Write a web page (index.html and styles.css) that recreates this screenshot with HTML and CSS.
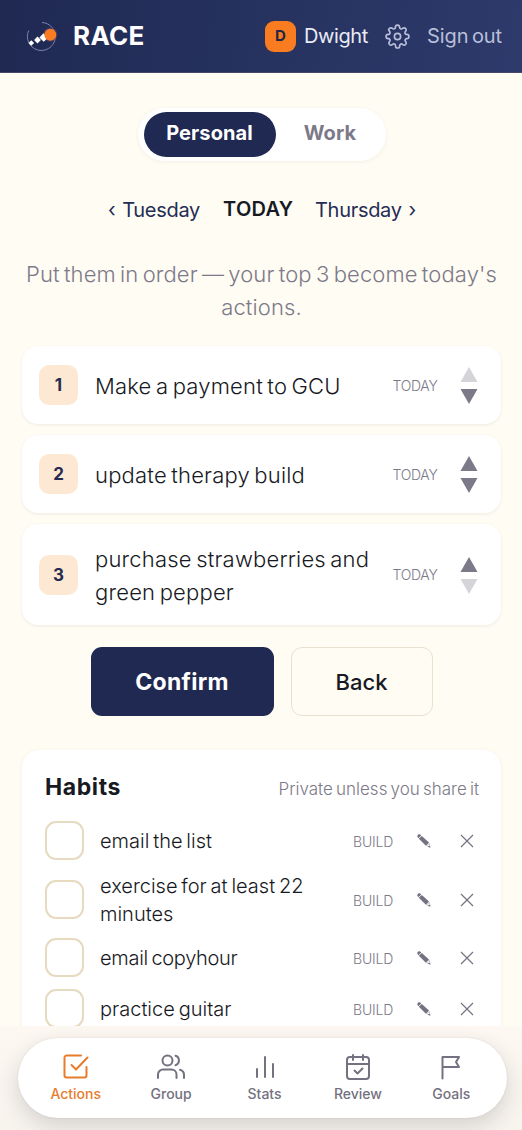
FILE: index.html
```
<!DOCTYPE html>
<html lang="en">
<head>
<meta charset="utf-8">
<title>RACE</title>
<link rel="stylesheet" href="styles.css">
</head>
<body>
<svg class="defs" width="0" height="0">
  <symbol id="pencil" viewBox="0 0 14 14"><path d="M.3 2.600Q.2 1.300 1.200.6 2.200-.2 3.200.4L4.300 1.500 1.300 4.300zM1.800 4.800 4.800 1.900 12 8.600 8.900 11.700z" fill="currentColor"/><path d="m9.600 11.900 2.500-2.600 1.200 3.900z" fill="none" stroke="currentColor" stroke-width=".4"/><path d="m11.900 11.900 1.200 1.200-1.600-.5z" fill="currentColor" stroke="currentColor" stroke-width=".8"/></symbol>
  <symbol id="cross" viewBox="0 0 14 14"><path d="m1 1 12 12M13 1 1 13" fill="none" stroke="currentColor" stroke-width="1.200"/></symbol>
  <symbol id="up" viewBox="0 0 18 15"><path d="M9 0 17.500 15H.5z" fill="currentColor"/></symbol>
  <symbol id="down" viewBox="0 0 18 15"><path d="M9 15 17.500 0H.5z" fill="currentColor"/></symbol>
</svg>
<header class="topbar">
  <svg class="logo" viewBox="0 0 34 34"><path d="M17 3.500A14 14 0 1 1 3.700 11.500" fill="none" stroke="#7a82aa" stroke-width="1"/><circle cx="25.300" cy="15.700" r="7.200" fill="#5d426a" opacity=".55"/><path d="m6.300 21.200 2.800 2.800-2.800 2.800-2.800-2.800zM12.500 17.600l3.400 3.400-3.400 3.400-3.400-3.400zM18.500 14.200l4 5-3.800 3.600-4.300-4.300z" fill="#fff"/><circle cx="25.300" cy="15.700" r="6" fill="#f97c20"/></svg>
  <span class="brand">RACE</span>
  <span class="avatar">D</span>
  <span class="user">Dwight</span>
  <svg class="gear" viewBox="0 0 24 24" fill="none" stroke="currentColor" stroke-width="1.600" stroke-linejoin="round"><circle cx="12" cy="12" r="3"/><path d="M19.400 15a1.650 1.650 0 0 0 .33 1.820l.06.06a2 2 0 1 1-2.830 2.830l-.06-.06a1.650 1.650 0 0 0-2.800 1.170V21a2 2 0 1 1-4 0v-.09a1.650 1.650 0 0 0-2.880-1.260l-.06.06a2 2 0 1 1-2.830-2.830l.06-.06A1.650 1.650 0 0 0 3.090 14H3a2 2 0 1 1 0-4h.09a1.650 1.650 0 0 0 1.260-2.880l-.06-.06a2 2 0 1 1 2.830-2.830l.06.06A1.650 1.650 0 0 0 10 3.090V3a2 2 0 1 1 4 0v.09a1.650 1.650 0 0 0 2.820 1.200l.06-.06a2 2 0 1 1 2.830 2.830l-.06.06A1.650 1.650 0 0 0 20.910 10H21a2 2 0 1 1 0 4h-.09a1.650 1.650 0 0 0-1.510 1z"/></svg>
  <span class="signout">Sign out</span>
</header>
<main class="content">
  <div class="switch"><span class="tab active">Personal</span><span class="tab work">Work</span></div>
  <div class="days">
    <span class="day prev">‹ Tuesday</span>
    <span class="today">TODAY</span>
    <span class="day next">Thursday ›</span>
  </div>
  <p class="hint">Put them in order — your top 3 become today's<br>actions.</p>
  <section class="tasks">
    <article class="task"><span class="num">1</span><span class="name">Make a payment to GCU</span><span class="when">TODAY</span><span class="arrows"><svg class="off"><use href="#up"/></svg><svg><use href="#down"/></svg></span></article>
    <article class="task"><span class="num">2</span><span class="name">update therapy build</span><span class="when">TODAY</span><span class="arrows"><svg><use href="#up"/></svg><svg><use href="#down"/></svg></span></article>
    <article class="task tall"><span class="num">3</span><span class="name">purchase strawberries and<br>green pepper</span><span class="when">TODAY</span><span class="arrows"><svg><use href="#up"/></svg><svg class="off"><use href="#down"/></svg></span></article>
  </section>
  <div class="buttons"><button class="confirm">Confirm</button><button class="back">Back</button></div>
  <section class="habits">
    <div class="habits-head"><h2>Habits</h2><span class="private">Private unless you share it</span></div>
    <div class="habit"><i class="box"></i><span class="label">email the list</span><span class="build">BUILD</span><svg class="act"><use href="#pencil"/></svg><svg class="act"><use href="#cross"/></svg></div>
    <div class="habit double"><i class="box"></i><span class="label">exercise for at least 22<br>minutes</span><span class="build">BUILD</span><svg class="act"><use href="#pencil"/></svg><svg class="act"><use href="#cross"/></svg></div>
    <div class="habit"><i class="box"></i><span class="label tight">email copyhour</span><span class="build">BUILD</span><svg class="act"><use href="#pencil"/></svg><svg class="act"><use href="#cross"/></svg></div>
    <div class="habit"><i class="box"></i><span class="label">practice guitar</span><span class="build">BUILD</span><svg class="act"><use href="#pencil"/></svg><svg class="act"><use href="#cross"/></svg></div>
  </section>
</main>
<footer class="dock">
  <nav class="nav">
    <a class="item current"><svg viewBox="0 0 28 28"><path d="M19 2.500H4.500a2 2 0 0 0-2 2v18a2 2 0 0 0 2 2h18a2 2 0 0 0 2-2V14M9.500 12l4.500 4.500L25.500 4.500"/></svg><span>Actions</span></a>
    <a class="item"><svg viewBox="0 0 28 28"><circle cx="10.500" cy="7.500" r="5"/><path d="M1 25v-3.500a5 5 0 0 1 5-5h8.500a5 5 0 0 1 5 5V25M18.500 2.800a5 5 0 0 1 0 9.500M23 16.800c2.400.7 4 2.500 4 5V25"/></svg><span>Group</span></a>
    <a class="item"><svg viewBox="0 0 28 28"><path d="M6 24v-8M14 24V4M22 24V11"/></svg><span>Stats</span></a>
    <a class="item"><svg viewBox="0 0 28 28"><rect x="3" y="4" width="22" height="22" rx="3"/><path d="M3 11h22M9 2v5M19 2v5M10.500 17.500l3 3 5-5"/></svg><span>Review</span></a>
    <a class="item"><svg viewBox="0 0 28 28"><path d="M5.500 25.500V4h16.500l-3 5 3 5H5.500"/></svg><span>Goals</span></a>
  </nav>
</footer>
</body>
</html>
```
FILE: styles.css
```
* { box-sizing: border-box; }
body { margin: 0; height: 1130px; overflow: hidden; display: flex; flex-direction: column; background: #fffcf4; font-family: Inter, "Open Sans", sans-serif; font-weight: 300; color: #171923; white-space: nowrap; }
.defs { display: none; }
.topbar { height: 73px; flex: none; display: flex; align-items: center; padding: 0 20px 0 25px; background: linear-gradient(100deg, #1f2952, #2d3a6b); border-bottom: 1px solid #46496a; color: #fff; }
.topbar > * { flex: none; }
.logo { width: 34px; height: 34px; margin-right: 14px; }
.brand { font-weight: 700; font-size: 26px; letter-spacing: .3px; width: 192px; padding-bottom: 1px; }
.avatar { width: 31px; height: 31px; border-radius: 9px; background: #f97c20; color: #252645; font-weight: 700; font-size: 15px; line-height: 30px; text-align: center; margin-right: 8px; }
.user { font-size: 20px; letter-spacing: -.4px; width: 81px; color: #e9ebf3; font-weight: 400; }
.gear { width: 25px; height: 25px; margin-right: 17px; color: #b9bfda; }
.signout { font-size: 20px; word-spacing: -2px; letter-spacing: -.1px; color: #b9bfda; font-weight: 400; }
.content { height: 953px; flex: none; overflow: hidden; padding: 35px 21px 0 22px; display: flex; flex-direction: column; }
.switch { align-self: center; width: 248px; height: 54px; padding: 4px 0 4px 6px; display: flex; border-radius: 27px; background: #fff; box-shadow: 0 1px 4px rgba(90,70,20,.07); font-size: 20px; font-weight: 700; }
.tab { flex: none; height: 45px; line-height: 43px; text-align: center; border-radius: 23px; color: #7c7988; letter-spacing: .1px; }
.active { width: 132px; background: #1f2952; color: #fff; }
.work { width: 109px; }
.days { display: flex; height: 30px; margin-top: 34px; padding-left: 86px; line-height: 30px; font-size: 20px; color: #242d54; font-weight: 400; }
.day { letter-spacing: -.3px; word-spacing: 1.5px; }
.prev { width: 115px; }
.today { width: 92px; font-weight: 600; letter-spacing: .3px; color: #171923; line-height: 28px; }
.hint { margin: 33px 0 0; height: 66px; text-align: center; font-size: 22px; line-height: 33px; color: #7c7988; letter-spacing: .1px; word-spacing: -2px; }
.tasks { display: flex; flex-direction: column; gap: 11px; margin-top: 22px; }
.task { height: 78px; display: flex; align-items: center; padding: 0 22px 0 17px; border-radius: 16px; background: #fff; box-shadow: 0 1px 3px rgba(80,60,20,.09); }
.tall { height: 101px; }
.num { width: 39px; height: 40px; border-radius: 10px; background: #fde8d3; color: #252a50; font-weight: 700; font-size: 17px; line-height: 40px; text-align: center; margin-right: 17px; }
.name { flex: 1; font-size: 22px; line-height: 33px; letter-spacing: .2px; word-spacing: -2px; padding-top: 2px; }
.when { width: 67.5px; font-size: 14px; letter-spacing: -.3px; color: #7c7988; }
.arrows { display: flex; flex-direction: column; gap: 7px; width: 18px; padding-top: 1px; margin: 0 1px 0 0; color: #7c7988; }
.arrows svg { width: 18px; height: 15px; }
.arrows .off { color: #d5d4d9; }
.buttons { display: flex; justify-content: center; gap: 17px; margin-top: 22px; }
button { height: 69px; border-radius: 11px; font-family: inherit; font-size: 22px; padding: 0; }
.confirm { width: 183px; border: 0; background: #1f2952; color: #fff; font-size: 23px; font-weight: 700; letter-spacing: .3px; }
.back { width: 142px; border: 1px solid #e9e1cf; background: transparent; color: #171923; font-weight: 500; }
.habits { flex: none; height: 420px; margin-top: 34px; padding: 19px 22px 0 23px; border-radius: 18px; background: #fff; box-shadow: 0 1px 4px rgba(80,60,20,.07); }
.habits-head { display: flex; justify-content: space-between; align-items: center; height: 36px; margin-bottom: 10px; }
h2 { margin: 0; font-size: 23px; font-weight: 700; letter-spacing: .6px; }
.private { font-size: 17px; word-spacing: -1.6px; color: #7c7988; padding-top: 4px; }
.habit { height: 51px; display: flex; align-items: center; }
.double { height: 66px; padding-top: 1px; }
.box { width: 39px; height: 39px; border: 2px solid #e6dac1; border-radius: 11px; margin-right: 16px; }
.label { flex: 1; font-size: 20px; line-height: 28px; word-spacing: -1.800px; }
.tight { letter-spacing: -.3px; }
.build { width: 64px; font-size: 14px; letter-spacing: -.2px; color: #7c7988; padding-top: 1px; }
.act { width: 14px; height: 14px; color: #747180; }
.act + .act { margin: 0 5px 0 29px; }
.dock { height: 104px; flex: none; padding: 12px 15px 0 18px; background: linear-gradient(#fdf8f1, #f7f3ed); }
.nav { height: 80px; display: flex; align-items: center; border-radius: 40px; background: #fff; padding: 0 9px 0 11px; box-shadow: 0 8px 22px rgba(31,30,50,.16), 0 0 2px rgba(31,30,50,.1); }
.item { flex: 1; display: flex; flex-direction: column; align-items: center; gap: 4px; font-size: 14px; line-height: 18px; font-weight: 500; color: #747180; }
.item svg { width: 28px; height: 28px; fill: none; stroke: currentColor; stroke-width: 2; stroke-linecap: round; stroke-linejoin: round; }
.current { color: #e77c2d; margin-right: 2px; }
```
